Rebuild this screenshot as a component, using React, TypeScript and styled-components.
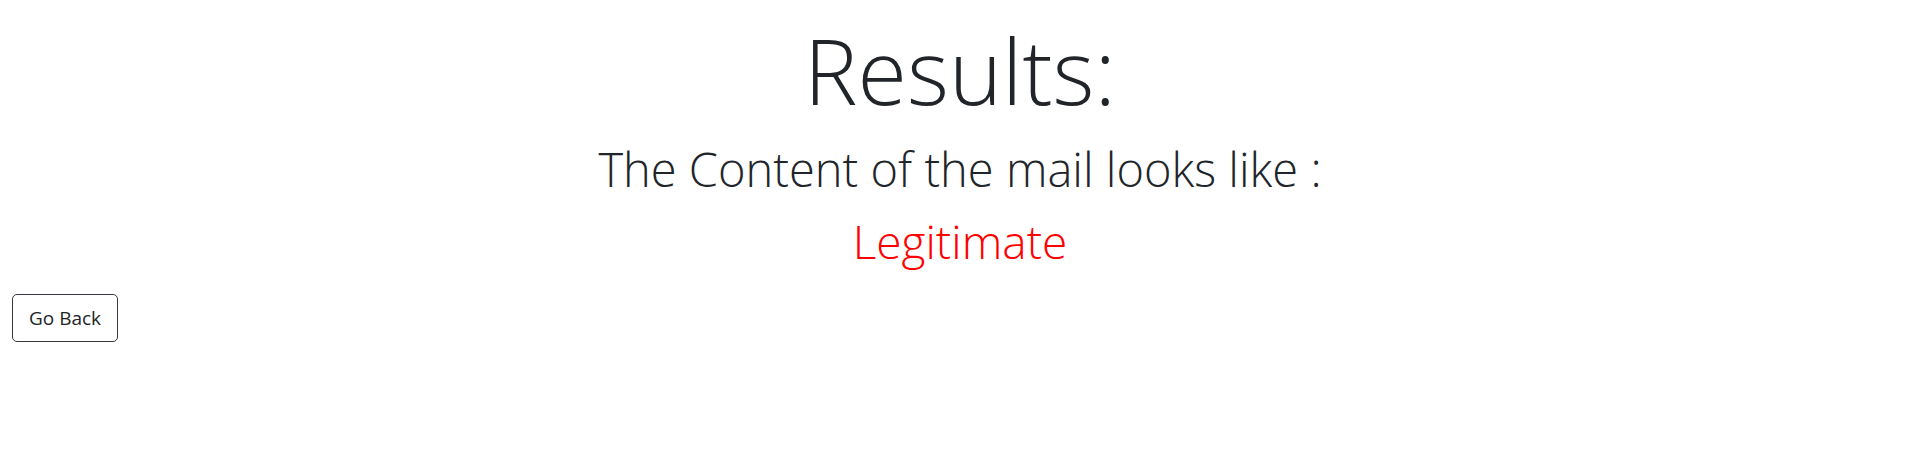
import React from 'react';
import styled, { createGlobalStyle } from 'styled-components';

const GlobalStyle = createGlobalStyle`
  html, body {
    margin: 0;
    padding: 0;
    background: #ffffff;
  }
  body {
    font-family: 'Open Sans', 'Noto Sans', sans-serif;
    color: #212529;
  }
`;

const App = () => {
  return (
    <StPage>
      <GlobalStyle />
      <StResult>
        <StTitle>Results:</StTitle>
        <StSubtitle>The Content of the mail looks like :</StSubtitle>
        <StVerdict>Legitimate</StVerdict>
      </StResult>
      <StActions>
        <StBackBtn type="button">Go Back</StBackBtn>
      </StActions>
    </StPage>
  );
};

export default App;

const StPage = styled.main`
  display: flex;
  flex-direction: column;

  width: 100%;
  min-height: 454px;
  padding: 0 12px;
  box-sizing: border-box;
`;

const StResult = styled.section`
  display: flex;
  flex-direction: column;
  align-items: center;

  padding-top: 16px;
`;

const StTitle = styled.h1`
  margin: 0;

  font-weight: 300;
  font-size: 90px;
  line-height: 108px;
  color: #212529;
`;

const StSubtitle = styled.h2`
  margin: 17px 0 0;

  font-weight: 300;
  font-size: 47px;
  line-height: 56px;
  color: #212529;
`;

const StVerdict = styled.h3`
  margin: 17px 0 0;

  font-weight: 300;
  font-size: 46px;
  line-height: 55px;
  color: #ff0000;
`;

const StActions = styled.div`
  display: flex;

  margin-top: 25px;
`;

const StBackBtn = styled.button`
  padding: 8px 16px;
  border: 1px solid #343a40;
  border-radius: 5px;
  background: transparent;

  font-family: 'Open Sans', 'Noto Sans', sans-serif;
  font-size: 19px;
  line-height: 30px;
  color: #212529;
  cursor: pointer;
`;
